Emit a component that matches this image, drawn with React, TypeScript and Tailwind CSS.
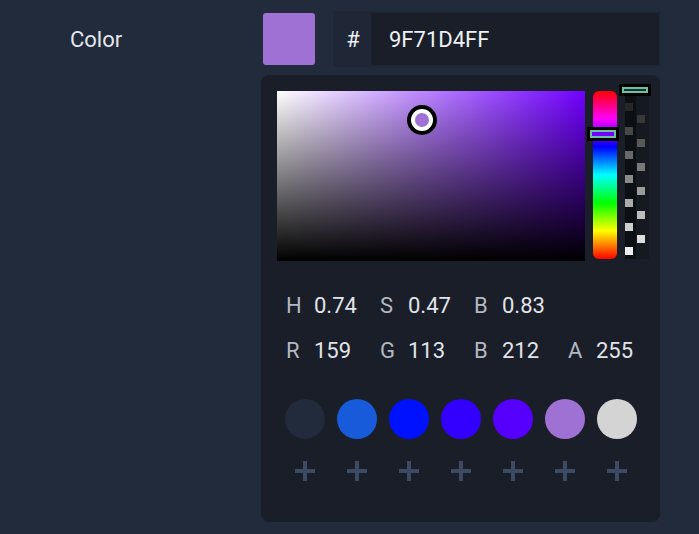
import React from 'react';

const swatches = ['#212b3b', '#175bdb', '#0011ff', '#3300ff', '#5500ff', '#9f71d4', '#d4d4d4'];

const hsb = [
  { label: 'H', value: '0.74' },
  { label: 'S', value: '0.47' },
  { label: 'B', value: '0.83' },
];

const rgba = [
  { label: 'R', value: '159' },
  { label: 'G', value: '113' },
  { label: 'B', value: '212' },
  { label: 'A', value: '255' },
];

// gray steps of the alpha strip, dark at top to white at bottom
const alphaSteps = Array.from({ length: 13 }, (_, i) => {
  const g = Math.round(0x26 + (i * (0xee - 0x26)) / 12);
  return { top: 12 + i * 12, left: i % 2 === 0 ? 0 : 12, color: `rgb(${g},${g},${g})` };
});

function StatRow({ items }: { items: { label: string; value: string }[] }) {
  return (
    <div className="flex pl-[9px] h-[26px] items-center leading-[26px]">
      {items.map((it, i) => (
        <div key={i} className="flex w-[94px] shrink-0">
          <span className="w-[28px] text-[#b4b8c1]">{it.label}</span>
          <span className="text-[#e2e4e9]">{it.value}</span>
        </div>
      ))}
    </div>
  );
}

function PlusIcon() {
  return (
    <svg width="20" height="20" viewBox="0 0 20 20">
      <rect x="0" y="8" width="20" height="4" fill="#3d4a63" />
      <rect x="8" y="0" width="4" height="20" fill="#3d4a63" />
    </svg>
  );
}

export default function App() {
  return (
    <div
      className="w-[699px] h-[534px] bg-[#212b3b] flex pl-[70px] pt-[11px] text-[22px] overflow-hidden"
      style={{ fontFamily: 'Roboto, "Noto Sans", sans-serif' }}
    >
      <div className="w-[191px] shrink-0 h-[56px] flex items-center text-[#e5e7eb]">Color</div>

      <div className="flex flex-col w-[400px] shrink-0">
        {/* swatch + hex field */}
        <div className="flex items-start h-[56px]">
          <div className="ml-[2px] mt-[2px] w-[52px] h-[52px] rounded-[3px] bg-[#9f71d4]" />
          <div className="ml-[18px] w-[328px] h-[56px] bg-[#1f2736] flex p-[2px]">
            <div className="w-[36px] flex items-center justify-center text-[#eef0f3]">#</div>
            <div className="flex-1 bg-[#191e28] flex items-center pl-[18px] text-[#eef0f3]">9F71D4FF</div>
          </div>
        </div>

        {/* picker panel */}
        <div className="mt-[8px] w-[399px] h-[447px] rounded-[8px] bg-[#191e28] pt-[16px] pl-[16px] pr-[11px] flex flex-col">
          <div className="flex h-[170px]">
            <div className="relative shrink-0 w-[308px] h-[170px] bg-[linear-gradient(to_bottom,rgba(0,0,0,0),#000),linear-gradient(to_right,#fff,#7000ff)]">
              <div className="absolute left-[130px] top-[14px] w-[30px] h-[30px] rounded-full bg-black flex items-center justify-center">
                <div className="w-[22px] h-[22px] rounded-full bg-white flex items-center justify-center">
                  <div className="w-[14px] h-[14px] rounded-full bg-[#9f71d4]" />
                </div>
              </div>
            </div>

            <div className="relative shrink-0 ml-[8px] w-[24px] h-[168px] rounded-[6px] bg-[linear-gradient(to_bottom,#f00_0%,#f0f_16.7%,#00f_33.3%,#0ff_50%,#0f0_66.7%,#ff0_83.3%,#f00_100%)]">
              <div className="absolute left-[-6px] top-[36px] w-[32px] h-[14px] bg-black p-[3px]">
                <div className="w-full h-full border-2 border-[#6cc0a0] bg-[#7000ff]" />
              </div>
            </div>

            <div className="relative shrink-0 ml-[8px] w-[24px] h-[168px]">
              <div className="absolute left-0 top-[5px] w-[24px] h-[163px] bg-[linear-gradient(to_right,#0c0f14_0%,#0c0f14_45%,#151a21_45%,#151a21_100%)]">
                {alphaSteps.map((s, i) => (
                  <div
                    key={i}
                    className="absolute w-[8px] h-[8px]"
                    style={{ top: s.top - 5, left: s.left, backgroundColor: s.color }}
                  />
                ))}
              </div>
              <div className="absolute left-[-6px] top-[-7px] w-[32px] h-[12px] bg-black p-[3px]">
                <div className="w-full h-full border-2 border-[#6cc0a0] bg-[#1d3036]" />
              </div>
            </div>
          </div>

          <div className="mt-[32px] flex flex-col gap-[19px]">
            <StatRow items={hsb} />
            <StatRow items={rgba} />
          </div>

          <div className="mt-[35px] pl-[8px] flex gap-[12px]">
            {swatches.map((c, i) => (
              <div key={i} className="w-[40px] h-[40px] rounded-full" style={{ backgroundColor: c }} />
            ))}
          </div>

          <div className="mt-[22px] pl-[18px] flex gap-[32px]">
            {swatches.map((_, i) => (
              <PlusIcon key={i} />
            ))}
          </div>
        </div>
      </div>
    </div>
  );
}
